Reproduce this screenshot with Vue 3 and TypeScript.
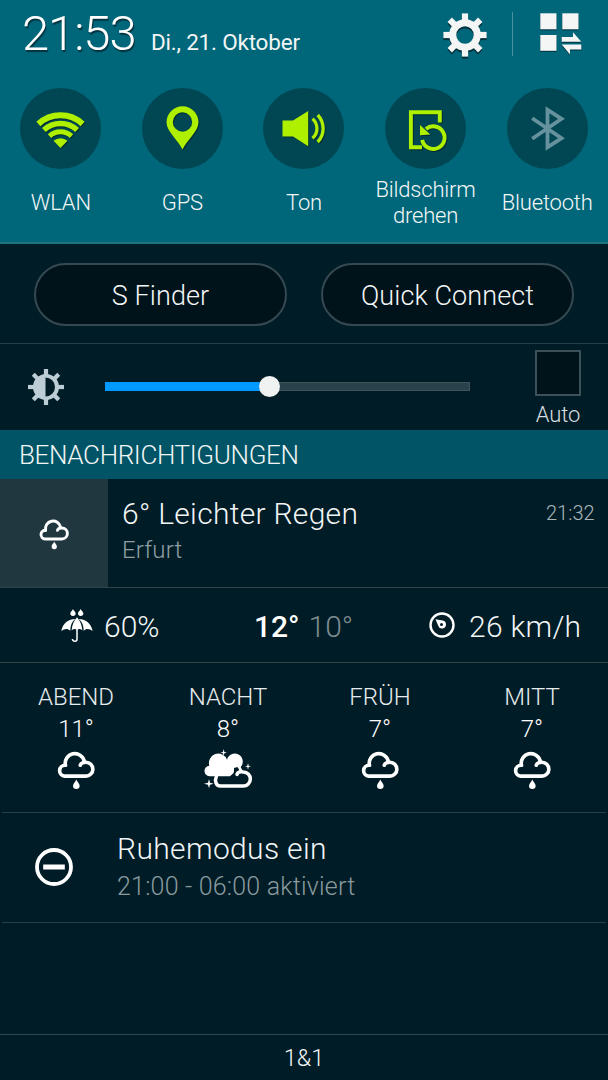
<script setup lang="ts">
interface Toggle { id: string; label: string }
interface Slot { name: string; temp: string; icon: 'rain' | 'night' }

const toggles: Toggle[] = [
  { id: 'wlan', label: 'WLAN' },
  { id: 'gps', label: 'GPS' },
  { id: 'ton', label: 'Ton' },
  { id: 'drehen', label: 'Bildschirm drehen' },
  { id: 'bluetooth', label: 'Bluetooth' },
]
const forecast: Slot[] = [
  { name: 'ABEND', temp: '11°', icon: 'rain' },
  { name: 'NACHT', temp: '8°', icon: 'night' },
  { name: 'FRÜH', temp: '7°', icon: 'rain' },
  { name: 'MITT', temp: '7°', icon: 'rain' },
]
const teeth: number[] = [0, 45, 90, 135, 180, 225, 270, 315]
const brightness = 45.3
</script>

<template>
  <div class="screen">
    <svg class="defs" width="0" height="0">
      <symbol id="rain" viewBox="168 483 120 118">
        <g fill="none" stroke="#fff" stroke-width="11" stroke-linecap="round">
          <path d="M196 526A29 29 0 0 1 253 514" />
          <path d="M241 526C243 519 250 517 258 517A21 21 0 0 1 258 559H194A16.500 16.500 0 0 1 196 526" />
        </g>
        <path d="M229 569C232 577 239 581 239 588A10 10 0 0 1 219 588C219 581 226 577 229 569Z" fill="#fff" />
      </symbol>
    </svg>

    <header class="top">
      <div class="status">
        <span class="clock">21:53</span>
        <span class="date">Di., 21. Oktober</span>
        <svg class="gear" viewBox="-23 -23 46 46">
          <g fill="#f4f6f6">
            <path fill-rule="evenodd" d="M0-15.800A15.800 15.800 0 1 1 0 15.800A15.800 15.800 0 1 1 0-15.800ZM0-8.700A8.700 8.700 0 1 0 0 8.700A8.700 8.700 0 1 0 0-8.700Z" />
            <rect v-for="a in teeth" :key="a" x="-3.100" y="-21.600" width="6.200" height="8" :transform="`rotate(${a})`" />
          </g>
        </svg>
        <i class="sep"></i>
        <svg class="edit" viewBox="540 13 44 44">
          <g fill="#f4f6f6">
            <rect x="540.300" y="13.300" width="16.200" height="16" />
            <rect x="562.300" y="13.300" width="16.200" height="16" />
            <rect x="540.300" y="35" width="16.200" height="15.800" />
            <path d="M561.700 37H573V32.200L581.300 41.700H561.700Z" />
            <path d="M581.300 44.500V49.600H570V54.400L561.700 44.500Z" />
          </g>
        </svg>
      </div>
      <div class="toggles">
        <div v-for="t in toggles" :key="t.id" class="toggle">
          <svg class="disc" viewBox="-40.500 -40.500 81 81">
            <g v-if="t.id === 'wlan'" class="lit" fill="none">
              <g stroke="#aef000">
                <path d="M-22.100-4.500A32.600 32.600 0 0 1 22.100-4.500" stroke-width="6" />
                <path d="M-16.600 1.500A24.500 24.500 0 0 1 16.600 1.500" stroke-width="5.500" />
                <path d="M-11 7.600A16.300 16.300 0 0 1 11 7.600" stroke-width="5" />
              </g>
              <path d="M0 19.500L-7 12.300A10.500 10.500 0 0 1 7 12.300Z" fill="#aef000" />
            </g>
            <path v-else-if="t.id === 'gps'" class="lit" fill="#aef000" fill-rule="evenodd"
              d="M0 21C-4 12-16 3-16-6.300A16 16 0 0 1 16-6.300C16 3 4 12 0 21ZM0-16.200A9.700 9.700 0 1 0 0 3.200A9.700 9.700 0 1 0 0-16.200Z" />
            <g v-else-if="t.id === 'ton'" class="lit">
              <path d="M-21-8H-10.500L4.700-17.500V17.700L-10.500 8H-21Z" fill="#aef000" />
              <path d="M9-9.800A13 13 0 0 1 9 9.800M14.200-13.500A19.500 19.500 0 0 1 14.200 13.500" fill="none" stroke="#aef000" stroke-width="3.300" />
            </g>
            <g v-else-if="t.id === 'drehen'" class="lit">
              <path d="M14.300-6V-16.300H-14.600V18.700H-3.500M-3.300 11.300A11.300 11.300 0 1 0 .5.500" fill="none" stroke="#aef000" stroke-width="3.900" />
              <path d="M-5.500-3.600V6.700L4.800 6Z" fill="#aef000" />
            </g>
            <path v-else d="M-15.300-10.300L14 9.600L0 18.800V-18.800L14-9.600L-15.300 10.300" fill="none" stroke="#66929d" stroke-width="3.800" />
          </svg>
          <div class="label">{{ t.label }}</div>
        </div>
      </div>
    </header>

    <div class="buttons">
      <button class="pill">S Finder</button>
      <button class="pill">Quick Connect</button>
    </div>

    <div class="bright">
      <svg class="sun" viewBox="-19 -19 38 38">
        <g fill="#bccdd5">
          <path fill-rule="evenodd" d="M0-13A13 13 0 1 1 0 13A13 13 0 1 1 0-13ZM-.5-9.500V9.500A9.500 9.500 0 0 0-.5-9.500Z" />
          <rect v-for="a in teeth" :key="a" x="-2.100" y="-18" width="4.200" height="7" :transform="`rotate(${a})`" />
        </g>
      </svg>
      <div class="track">
        <div class="fill" :style="{ width: brightness + '%' }"><i class="knob"></i></div>
      </div>
      <div class="auto"><i class="check"></i><span>Auto</span></div>
    </div>

    <h2 class="section">BENACHRICHTIGUNGEN</h2>

    <div class="weather">
      <div class="thumb"><svg class="small"><use href="#rain" /></svg></div>
      <div class="wtext">
        <div class="title">6° Leichter Regen</div>
        <div class="city">Erfurt</div>
      </div>
      <time>21:32</time>
    </div>

    <div class="facts">
      <div class="fact rainchance">
        <svg class="umbrella" viewBox="183 57 96 102">
          <g fill="#fff">
            <path d="M219 57C221 63 227 65 227 70A8 8 0 0 1 211 70C211 65 217 63 219 57ZM242 57C244 63 250 65 250 70A8 8 0 0 1 234 70C234 65 240 63 242 57Z" />
            <path d="M226 87C206 87 188 99 184 123C194 115 203 115 211 122C211 105 217 94 226 87ZM236 87C256 87 273 99 278 123C268 115 259 115 251 122C251 105 245 94 236 87Z" />
            <path d="M231 82C222 92 216 106 215 121Q223 115 229 118V121H233V118Q240 115 247 121C246 106 240 92 231 82Z" />
          </g>
          <path d="M231 116V148Q231 154 225 154Q218 154 217 147" fill="none" stroke="#fff" stroke-width="4.500" />
        </svg>
        <span>60%</span>
      </div>
      <div class="fact range"><b>12°</b><span class="low">10°</span></div>
      <div class="fact wind">
        <svg class="gauge" viewBox="-13 -13 26 26">
          <circle r="11.500" fill="none" stroke="#fff" stroke-width="2.400" />
          <path fill="#fff" fill-rule="evenodd" d="M-6.500-5.700L.7-4.500A4 4 0 1 1-3.800.7ZM-.5-2A1.500 1.500 0 1 0-.5 1A1.500 1.500 0 1 0-.5-2Z" />
        </svg>
        <span>26 km/h</span>
      </div>
    </div>

    <div class="forecast">
      <div v-for="s in forecast" :key="s.name" class="slot">
        <div class="when">{{ s.name }}</div>
        <div class="temp">{{ s.temp }}</div>
        <svg v-if="s.icon === 'rain'" class="big"><use href="#rain" /></svg>
        <svg v-else class="night" viewBox="609 477 150 120">
          <g fill="#fff">
            <path d="M631 559A16 16 0 0 1 628 527A28 28 0 0 1 681 509A24 24 0 1 1 722 531L730 546L716 545L700 550L690 559Z" />
            <path d="M671 477L673 486L681 488L673 490L671 499L669 490L661 488L669 486ZM744 519L746 527L753 529L746 531L744 539L742 531L735 529L742 527ZM627 567L630 578L641 581L630 584L627 595L624 584L612 581L624 578Z" />
          </g>
          <path d="M700 551Q703 542 702 534Q708 533 712 531Q716 535 718 541Q709 543 706 551Z" fill="#001c26" />
          <path d="M655 563H698Q706 562 708 553Q730 546 741 558Q746 573 732 582H660Q650 574 655 563Z" fill="#001c26" />
          <path d="M649 560C643 572 648 588 661 588H730A20.500 20.500 0 0 0 730 546Q714 544 711 553" fill="none" stroke="#fff" stroke-width="10.500" stroke-linecap="round" />
        </svg>
      </div>
    </div>

    <div class="quiet">
      <svg class="dnd" viewBox="-19 -19 38 38">
        <circle r="17" fill="none" stroke="#fff" stroke-width="3.800" />
        <rect x="-10.800" y="-2.500" width="21.600" height="5" fill="#fff" />
      </svg>
      <div>
        <div class="qtitle">Ruhemodus ein</div>
        <div class="qsub">21:00 - 06:00 aktiviert</div>
      </div>
    </div>

    <footer class="carrier">1&amp;1</footer>
  </div>
</template>

<style>
body { margin: 0; background: #001c26; }
</style>

<style scoped>
.screen {
  width: 608px; height: 1080px; overflow: hidden; display: flex; flex-direction: column;
  background: #001c26; color: #f2f5f5; font-family: Roboto, sans-serif; font-weight: 300;
  white-space: nowrap;
}
.screen * { box-sizing: border-box; }
svg { display: block; flex: none; }
.defs { position: absolute; }
.top { height: 244px; flex: none; background: #006679; border-bottom: 2px solid #1d7582; }
.status { display: flex; align-items: flex-start; height: 88px; }
.clock {
  margin-left: 22px; width: 129px; font-size: 49px; line-height: 68px; letter-spacing: -1.1px;
  color: #fff; text-shadow: 1px 2px 1px rgba(0, 30, 38, .7);
}
.date { margin-top: 27px; font-size: 22.500px; line-height: 30px; font-weight: 400; letter-spacing: -.2px; width: 291px; }
.gear { width: 46px; height: 46px; margin-top: 12px; filter: drop-shadow(0 2px 0 rgba(0, 35, 44, .8)); }
.sep { width: 1px; height: 44px; margin: 12px 0 0 24px; background: #4a929e; }
.edit { width: 44px; height: 44px; margin: 13px 0 0 27px; filter: drop-shadow(0 1px 0 rgba(0, 35, 44, .8)); }
.toggles { display: grid; grid-template-columns: repeat(5, 1fr); }
.toggle { display: flex; flex-direction: column; align-items: center; }
.disc { width: 81px; height: 81px; border-radius: 50%; background: #004753; }
.lit { filter: drop-shadow(1px 1.5px 0.5px rgba(0, 25, 30, .6)); }
.label {
  height: 67px; width: 112px; display: flex; align-items: center; justify-content: center;
  text-align: center; white-space: normal; font-size: 22px; line-height: 25.500px; letter-spacing: -.2px; color: #f4f7f8;
}
.buttons { height: 100px; flex: none; display: flex; gap: 34px; padding: 19px 34px; border-bottom: 1px solid #26404a; }
.pill {
  width: 253px; height: 63px; padding: 2px 0 0; border: 2px solid #354951; border-radius: 32px;
  background: #00121a; color: #f3f6f6; font: 300 27px/59px Roboto, sans-serif; letter-spacing: .1px;
}
.bright { height: 86px; flex: none; display: flex; }
.sun { width: 38px; height: 38px; margin: 24px 0 0 27px; }
.track { width: 365px; height: 9px; margin: 38px 0 0 40px; background: #2a424c; border: 1px solid #40545c; }
.fill { height: 9px; margin: -1px; background: #0099ff; position: relative; }
.knob { position: absolute; right: -11px; top: -6px; width: 21px; height: 21px; border-radius: 50%; background: #f0f1f1; }
.auto { width: 60px; margin: 6px 0 0 58px; display: flex; flex-direction: column; align-items: center; font-size: 22px; line-height: 30px; color: #d8dfe0; letter-spacing: -.1px; }
.check { width: 46px; height: 46px; margin: 0 1px 4px 0; border: 2px solid #3b5058; background: #00121a; }
.section { margin: 0; height: 49px; flex: none; padding-left: 19px; background: #005465; font-size: 26px; line-height: 51px; font-weight: 300; letter-spacing: -.36px; }
.weather { height: 109px; flex: none; display: flex; border-bottom: 1px solid #304349; }
.thumb { width: 108px; background: #213740; display: flex; padding: 40px 0 0 38px; }
.small { width: 32px; height: 31px; }
.wtext { width: 424px; padding: 17px 0 0 14px; }
.title { font-size: 30px; line-height: 36px; letter-spacing: .3px; }
.city { font-size: 24px; line-height: 37px; letter-spacing: .15px; color: #8f9fa4; }
time { margin-left: 14px; font-size: 20px; line-height: 68px; color: #a9b6ba; font-weight: 300; }
.facts { height: 75px; flex: none; display: flex; border-bottom: 1px solid #304349; font-size: 30px; line-height: 77px; }
.fact { display: flex; }
.rainchance { width: 254px; padding-left: 61px; }
.umbrella { width: 32px; height: 34px; margin: 21px 11px 0 0; }
.range { width: 175px; gap: 9px; }
.range b { font-weight: 500; color: #fff; }
.low { color: #7e8d92; }
.wind { letter-spacing: .3px; }
.gauge { width: 26px; height: 26px; margin: 24px 14px 0 0; }
.forecast { height: 150px; flex: none; margin: 0 2px; padding-top: 19px; display: grid; grid-template-columns: repeat(4, 152px); justify-content: center; border-bottom: 1px solid #2a3e46; }
.slot { display: flex; flex-direction: column; align-items: center; }
.when { font-size: 24px; line-height: 31px; color: #e6ebed; }
.temp { font-size: 24px; line-height: 33px; color: #fff; }
.big { width: 40px; height: 39px; margin: 5px 1px 0 0; }
.night { width: 50px; height: 40px; margin-top: 3px; }
.quiet { height: 110px; flex: none; margin: 0 2px; display: flex; border-bottom: 1px solid #2a3e46; }
.dnd { width: 38px; height: 38px; margin: 35px 44px 0 33px; }
.qtitle { margin-top: 18px; font-size: 30px; line-height: 36px; letter-spacing: .35px; }
.qsub { font-size: 25px; line-height: 39px; letter-spacing: .2px; color: #8a9a9f; }
.carrier { margin-top: auto; height: 46px; flex: none; border-top: 1px solid #33474e; text-align: center; font-size: 23.500px; line-height: 47px; }
</style>
